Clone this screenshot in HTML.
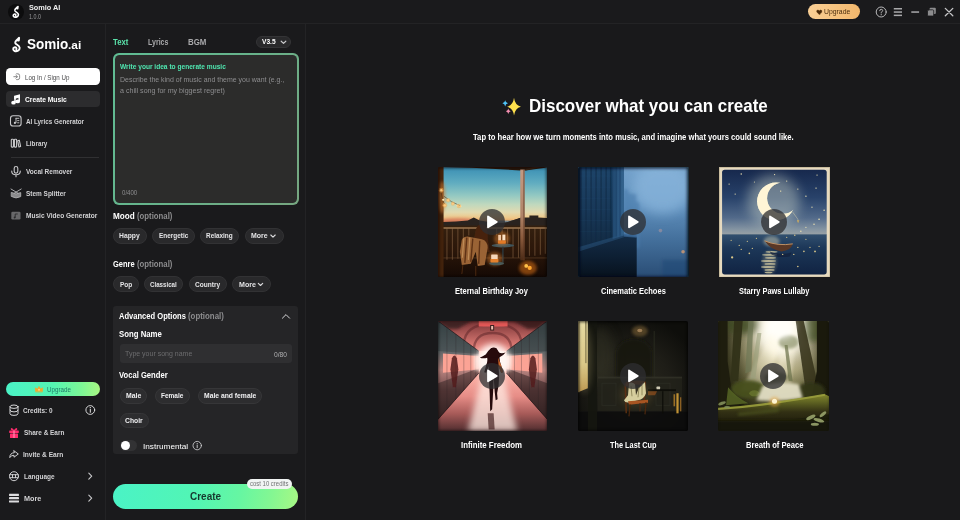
<!DOCTYPE html>
<html lang="en">
<head>
<meta charset="utf-8">
<title>Somio AI</title>
<style>
html,body{margin:0;padding:0;}
body{width:960px;height:520px;overflow:hidden;background:#19191b;font-family:"Liberation Sans",sans-serif;position:relative;}
.abs,.t,.b{position:absolute;}
.t{white-space:pre;margin:0;transform-origin:0 50%;}
#txt{position:absolute;left:0;top:0;width:960px;height:520px;opacity:0.999;}
.b{box-sizing:border-box;}
.chip{position:absolute;box-sizing:border-box;height:15.6px;border-radius:8px;background:#29292b;border:1px solid #323234;}
svg{position:absolute;overflow:visible;}
.thumb{position:absolute;width:110px;height:111px;border-radius:2px;overflow:hidden;}
.thumb>svg{left:0;top:0;width:110px;height:111px;}
.play{position:absolute;width:26px;height:26px;border-radius:13px;background:rgba(46,46,49,0.76);}
</style>
</head>
<body>
<!-- regions -->
<div class="b" style="left:0;top:0;width:960px;height:24px;background:#1a1a1c;border-bottom:1px solid #232325;"></div>
<div class="b" style="left:0;top:24px;width:105.500px;height:496px;background:#1a1a1c;border-right:1px solid #232325;"></div>
<div class="b" style="left:105.500px;top:24px;width:200.200px;height:496px;background:#1a1a1c;border-right:1px solid #232325;"></div>
<div class="b" style="left:305.700px;top:24px;width:654.300px;height:496px;background:#19191b;"></div>

<!-- title bar logo -->
<div class="b" style="left:8px;top:3.5px;width:16px;height:16px;border-radius:8px;background:#0c0c0d;"></div>

<!-- sidebar buttons -->
<div class="b" style="left:6px;top:68px;width:94px;height:17.4px;border-radius:4.5px;background:#ffffff;"></div>
<div class="b" style="left:6px;top:91px;width:94px;height:16px;border-radius:4px;background:#2c2c2e;"></div>
<div class="b" style="left:11px;top:157px;width:88px;height:1px;background:#303032;"></div>
<div class="b" style="left:6px;top:381.6px;width:94px;height:14.6px;border-radius:7.3px;background:linear-gradient(90deg,#4af3c6 0%,#54f4b2 50%,#7cf696 80%,#a8f782 100%);"></div>

<!-- middle panel -->
<div class="b" style="left:256px;top:36px;width:34.6px;height:12.2px;border-radius:6.1px;background:#29292b;border:1px solid #343436;"></div>
<div class="b" style="left:113.300px;top:53.300px;width:185.500px;height:151.300px;border-radius:6px;background:linear-gradient(120deg,#60bd94 0%,#66b48c 45%,#76a680 100%);"></div>
<div class="b" style="left:114.750px;top:54.750px;width:182.600px;height:148.400px;border-radius:4.600px;background:#2c2c2b;"></div>

<div class="chip" style="left:113px;top:228.2px;width:33.6px;"></div>
<div class="chip" style="left:152.4px;top:228.2px;width:42.4px;"></div>
<div class="chip" style="left:200px;top:228.2px;width:39.3px;"></div>
<div class="chip" style="left:244.8px;top:228.2px;width:38.9px;"></div>

<div class="chip" style="left:113px;top:276.4px;width:25.6px;"></div>
<div class="chip" style="left:144.2px;top:276.4px;width:38.8px;"></div>
<div class="chip" style="left:189px;top:276.4px;width:37.8px;"></div>
<div class="chip" style="left:232.4px;top:276.4px;width:38.6px;"></div>

<div class="b" style="left:113px;top:306px;width:185px;height:148px;border-radius:3px;background:#252527;"></div>
<div class="b" style="left:119.6px;top:344.4px;width:172.6px;height:19px;border-radius:3px;background:#2f2f31;"></div>

<div class="chip" style="left:119.7px;top:388.3px;width:27.8px;background:#2d2d2f;border-color:#363638;"></div>
<div class="chip" style="left:154.7px;top:388.3px;width:35.4px;background:#2d2d2f;border-color:#363638;"></div>
<div class="chip" style="left:197.6px;top:388.3px;width:64.6px;background:#2d2d2f;border-color:#363638;"></div>
<div class="chip" style="left:119.7px;top:412.5px;width:29.2px;background:#2d2d2f;border-color:#363638;"></div>

<!-- toggle -->
<div class="b" style="left:119.7px;top:439.6px;width:17.8px;height:11.8px;border-radius:5.9px;background:#323234;"></div>
<div class="b" style="left:120.6px;top:440.8px;width:9.4px;height:9.4px;border-radius:4.7px;background:#ffffff;"></div>

<!-- create button -->
<div class="b" style="left:113px;top:483.6px;width:185px;height:25px;border-radius:12.5px;background:linear-gradient(100deg,#4af3c6 0%,#52f5b4 45%,#66f6a2 68%,#84f792 85%,#a8f884 100%);"></div>
<div class="b" style="left:246.900px;top:478.700px;width:45.400px;height:10.200px;border-radius:5.100px;background:#f1f4f3;"></div>

<!-- top right upgrade -->
<div class="b" style="left:807.7px;top:4.4px;width:52.6px;height:15px;border-radius:7.5px;background:linear-gradient(90deg,#f9cf95,#f3b86c);"></div>

<!-- ===== icons (page coordinates) ===== -->
<svg width="960" height="520" viewBox="0 0 960 520" style="left:0;top:0;pointer-events:none" fill="none" stroke-linecap="round" stroke-linejoin="round">
<defs>

</defs>
<!-- title-bar logo glyph -->
<path d="M7.600 0.600 C5.200 2.600 2.800 4 3.300 6.300 C3.800 8.300 7.900 8.600 8.200 11.600 C8.400 14.600 5 16 2.600 15.200 C0.600 14.500 0.400 12 2.300 11.200 C3.900 10.600 5.200 12 4.400 13.300 M7.600 0.600 L7.200 3.600 L5.500 3.300" transform="translate(12.500 6.100) scale(0.720)" stroke="#fff" stroke-width="2.200"/>
<!-- sidebar logo glyph -->
<path d="M7.600 0.600 C5.200 2.600 2.800 4 3.300 6.300 C3.800 8.300 7.900 8.600 8.200 11.600 C8.400 14.600 5 16 2.600 15.200 C0.600 14.500 0.400 12 2.300 11.200 C3.900 10.600 5.200 12 4.400 13.300 M7.600 0.600 L7.200 3.600 L5.500 3.300" transform="translate(12.300 37.300) scale(0.900)" stroke="#fff" stroke-width="2.100"/>

<!-- login icon -->
<g stroke="#7a7a7c" stroke-width="0.900">
<path d="M16.600 73.800 H17.800 Q19.600 73.800 19.600 75.600 V77.800 Q19.600 79.600 17.800 79.600 H16.600"/>
<path d="M13.800 76.700 H17.300 M15.900 75.200 L17.400 76.700 L15.900 78.200"/>
</g>
<!-- create music (double note) -->
<g fill="#fff" stroke="none">
<path d="M14.200 95.800 L20 94.300 V97.500 L14.200 99 Z"/>
<rect x="14.200" y="96" width="1.600" height="6.700"/><rect x="18.400" y="95" width="1.600" height="6.300"/>
<ellipse cx="13.500" cy="102.700" rx="2.300" ry="1.900"/><ellipse cx="17.700" cy="101.400" rx="2.300" ry="1.900"/>
</g>
<!-- AI lyrics -->
<g stroke="#c9c9cb" stroke-width="1.100">
<rect x="10.500" y="115.800" width="10.600" height="10.200" rx="2.600"/>
<path d="M16 118.300 V122.600 M16 118.300 H18.900 M17.600 120.600 H18.900 M17.600 122.800 H18.900" stroke-width="0.900"/>
<circle cx="14.900" cy="122.900" r="1.100" fill="#c9c9cb" stroke="none"/>
</g>
<!-- library -->
<g stroke="#c9c9cb" stroke-width="1.100">
<rect x="11.300" y="139.300" width="2.200" height="7.800" rx="0.600"/>
<rect x="14.400" y="139.300" width="2.200" height="7.800" rx="0.600"/>
<path d="M17.700 140.800 L19.300 140.200 L20.600 146.400 L18.900 147 Z"/>
</g>
<!-- mic -->
<g stroke="#c9c9cb" stroke-width="1.100">
<rect x="14.200" y="166.500" width="3.600" height="6.600" rx="1.800"/>
<path d="M11.700 171 Q11.700 174.800 16 174.800 Q20.300 174.800 20.300 171 M16 174.800 V176.700"/>
</g>
<!-- drum -->
<g stroke="#a9a9ab" stroke-width="1">
<path d="M11 189 L18.500 193.500 M21.200 189 L13.700 193.500"/>
<path d="M11.600 192.600 Q16.100 195.400 20.700 192.600 V196.600 Q16.100 199.300 11.600 196.600 Z" fill="#8a8a8c"/>
</g>
<!-- video box -->
<rect x="11.300" y="211.800" width="9.200" height="7.800" rx="1.300" fill="#68686a"/>
<path d="M15.200 217.400 V214 H17.300" stroke="#2a2a2c" stroke-width="0.900"/><circle cx="14.600" cy="217.500" r="0.900" fill="#2a2a2c"/>

<!-- crown -->
<path d="M35.600 391.600 L35.300 387.800 L37.400 389 L39 386.400 L40.600 389 L42.700 387.800 L42.400 391.600 Z" fill="#f6a82a" stroke="#f6a82a" stroke-width="0.600"/>
<circle cx="39" cy="389.800" r="1" fill="#fbd68a"/>
<!-- database -->
<g stroke="#d6d6d8" stroke-width="1">
<ellipse cx="14" cy="406.700" rx="4" ry="1.700"/>
<path d="M10 406.700 V413.700 Q10 415.400 14 415.400 Q18 415.400 18 413.700 V406.700 M10 410.200 Q10 411.900 14 411.900 Q18 411.900 18 410.200"/>
</g>
<!-- info -->
<circle cx="90.300" cy="410" r="4.400" stroke="#e6e6e8" stroke-width="0.900"/>
<path d="M90.300 409.400 V412.300" stroke="#e6e6e8" stroke-width="1"/><circle cx="90.300" cy="407.700" r="0.650" fill="#e6e6e8"/>
<!-- gift -->
<g fill="#ff2d6e" stroke="none">
<rect x="9.200" y="430.600" width="9.600" height="2.400" rx="0.400"/>
<rect x="10" y="433.500" width="8" height="4.500" rx="0.500"/>
<path d="M14 430.600 Q10.500 430.400 11 428.800 Q11.800 427.400 14 430.600 Q16.200 427.400 17 428.800 Q17.500 430.400 14 430.600 Z" stroke="#ff2d6e" stroke-width="0.700"/>
</g>
<rect x="13.500" y="430.600" width="1" height="7.400" fill="#ff9fbd"/>
<!-- share arrow -->
<path d="M14 450.800 L18.300 454 L14 457.200 V455.300 Q11 455.100 9.800 457.600 Q9.800 453 14 452.700 Z" stroke="#d6d6d8" stroke-width="0.950"/>
<!-- globe -->
<g stroke="#d6d6d8" stroke-width="0.950">
<circle cx="14" cy="476.200" r="4.500"/>
<path d="M9.800 474.700 H18.200 M9.800 477.700 H18.200 M12.500 474.700 V477.700 M15.500 474.700 V477.700"/>
</g>
<!-- hamburger -->
<g fill="#dcdcde" stroke="none"><rect x="9" y="493.800" width="10" height="2.100" rx="0.400"/><rect x="9" y="497.100" width="10" height="2.100" rx="0.400"/><rect x="9" y="500.400" width="10" height="2.100" rx="0.400"/></g>
<!-- chevrons right -->
<g stroke="#c9c9cb" stroke-width="1.100"><path d="M88.800 473.200 L91.700 476.200 L88.800 479.200"/><path d="M88.800 495.200 L91.700 498.200 L88.800 501.200"/></g>

<!-- v3.5 chevron -->
<path d="M281.200 41.200 L283.500 43.400 L285.800 41.200" stroke="#c9c9cb" stroke-width="1.200"/>
<!-- more chevrons -->
<path d="M270.800 235 L273 237.200 L275.200 235" stroke="#dcdcde" stroke-width="1.100"/>
<path d="M258.300 283.300 L260.500 285.500 L262.700 283.300" stroke="#dcdcde" stroke-width="1.100"/>
<!-- advanced chevron up -->
<path d="M282.400 318.200 L286 314.600 L289.600 318.200" stroke="#d6d6d8" stroke-width="1"/>
<!-- instrumental info -->
<circle cx="197.200" cy="445.600" r="4.200" stroke="#d0d0d2" stroke-width="0.850"/>
<path d="M197.200 445 V447.700" stroke="#d0d0d2" stroke-width="0.900"/><circle cx="197.200" cy="443.500" r="0.600" fill="#d0d0d2"/>

<!-- top-right -->
<path d="M819.300 14.600 L816.800 11.900 Q816.300 10.300 817.800 10.100 Q818.800 10.100 819.300 11 Q819.800 10.100 820.800 10.100 Q822.300 10.300 821.800 11.900 Z" fill="#4a2a08" stroke="#4a2a08" stroke-width="0.500"/>
<circle cx="881.200" cy="12" r="5" stroke="#b9b9bb" stroke-width="1"/>
<path d="M879.700 10.700 Q879.700 9.300 881.200 9.300 Q882.700 9.300 882.700 10.600 Q882.700 11.500 881.200 12.300 V13" stroke="#b9b9bb" stroke-width="0.950"/><circle cx="881.200" cy="14.700" r="0.600" fill="#b9b9bb"/>
<g fill="#a9a9ab" stroke="none"><rect x="893.800" y="8" width="8.200" height="1.500"/><rect x="893.800" y="11.300" width="8.200" height="1.500"/><rect x="893.800" y="14.600" width="8.200" height="1.500"/>
<rect x="911.300" y="11.300" width="7.800" height="1.500"/></g>
<rect x="929.600" y="7.700" width="6.200" height="6.200" rx="1" fill="#8c8c8e"/>
<rect x="927.500" y="9.800" width="6.200" height="6.200" rx="1" fill="#8c8c8e" stroke="#1b1b1d" stroke-width="0.800"/>
<path d="M945.300 8.400 L952.800 15.800 M952.800 8.400 L945.300 15.800" stroke="#c6c6c8" stroke-width="1.300"/>

<!-- sparkles -->
<g stroke="none">
<path d="M514 97.800 Q514.900 105.200 520.900 106.700 Q514.900 108.200 514 115.600 Q513.100 108.200 507.100 106.700 Q513.100 105.200 514 97.800 Z" fill="#ffe14d"/>
<path d="M505.200 100.200 Q505.600 102.800 508 103.300 Q505.600 103.800 505.200 106.400 Q504.800 103.800 502.400 103.300 Q504.800 102.800 505.200 100.200 Z" fill="#4fc3f7"/>
<path d="M508.300 108.600 Q508.700 110.900 510.700 111.300 Q508.700 111.700 508.300 114 Q507.900 111.700 505.900 111.300 Q507.900 110.900 508.300 108.600 Z" fill="#f48fb1"/>
</g>
</svg>

<!-- ===== thumbnails ===== -->
<svg width="0" height="0" style="position:absolute">
<defs>
<filter id="b1" x="-50%" y="-50%" width="200%" height="200%"><feGaussianBlur stdDeviation="0.6"/></filter>
<filter id="b2" x="-50%" y="-50%" width="200%" height="200%"><feGaussianBlur stdDeviation="1.5"/></filter>
<filter id="b3" x="-50%" y="-50%" width="200%" height="200%"><feGaussianBlur stdDeviation="3"/></filter>
<filter id="b5" x="-50%" y="-50%" width="200%" height="200%"><feGaussianBlur stdDeviation="6"/></filter>
<radialGradient id="vig" cx="50%" cy="50%" r="72%"><stop offset="0.72" stop-color="#000" stop-opacity="0"/><stop offset="1" stop-color="#000" stop-opacity="0.75"/></radialGradient>
</defs>
</svg>

<!-- 1: Eternal Birthday Joy -->
<div class="thumb" style="left:437.800px;top:166.500px;width:109.300px;height:110.500px;">
<svg viewBox="0 0 110 110" preserveAspectRatio="none" style="width:109.300px;">
<defs>
<linearGradient id="s1" x1="0" y1="0" x2="0" y2="1">
<stop offset="0" stop-color="#3a8fb4"/><stop offset="0.28" stop-color="#60acc0"/><stop offset="0.5" stop-color="#92c8c2"/><stop offset="0.66" stop-color="#bfd8be"/><stop offset="0.8" stop-color="#e2dab0"/><stop offset="0.9" stop-color="#efc888"/><stop offset="0.97" stop-color="#e8a062"/><stop offset="1" stop-color="#e08850"/>
</linearGradient>
<linearGradient id="f1" x1="0" y1="0" x2="0" y2="1"><stop offset="0" stop-color="#34200f"/><stop offset="0.45" stop-color="#2c170a"/><stop offset="1" stop-color="#140904"/></linearGradient>
<linearGradient id="p1" x1="0" y1="0" x2="0" y2="1"><stop offset="0" stop-color="#c49a82"/><stop offset="0.5" stop-color="#b08468"/><stop offset="0.75" stop-color="#8a5a3c"/><stop offset="1" stop-color="#4a2a16"/></linearGradient>
</defs>
<rect width="110" height="110" fill="#1c0e06"/>
<rect x="5" y="0" width="105" height="56" fill="url(#s1)"/>
<ellipse cx="20" cy="54" rx="20" ry="3.500" fill="#c85a50" opacity="0.55" filter="url(#b2)"/>
<!-- hills -->
<path d="M5 54.500 L18 54 L30 53 L36 50 L42 53 L52 54.500 L64 55 L70 54.500 L78 52 L84 50 L92 50 L92 48 L101 48 L101 50 L110 50.500 L110 62 L5 62 Z" fill="#2a231f"/>
<rect x="60" y="53.100" width="18" height="2" fill="#5f7f92" opacity="0.85"/>
<path d="M66 55.500 L70 54.500 L78 52 L84 50 L84 57 L66 57 Z" fill="#2a231f"/>
<!-- floor / lower -->
<rect x="0" y="58" width="110" height="52" fill="url(#f1)"/>
<!-- balusters -->
<g stroke="#a87e58" stroke-width="1.100" opacity="0.42" filter="url(#b1)">
<path d="M9 61V92M14.500 61V92M20 61V91M25.500 61V74M31 61V68M59 61V68M64.500 61V66M70 61V76M75.500 61V90M81 61V90M92 61V88M97.500 61V88M103 61V87M108 61V86"/>
</g>
<rect x="5" y="59.700" width="105" height="1.500" fill="#b88c62" opacity="0.8"/>
<rect x="5" y="89.500" width="105" height="1.200" fill="#7a5434" opacity="0.4"/>
<!-- left wall -->
<rect x="0" y="0" width="5.600" height="110" fill="#42220c"/>
<ellipse cx="4" cy="30" rx="3.500" ry="16" fill="#c87830" opacity="0.6" filter="url(#b2)"/>
<!-- roof beam -->
<path d="M5 0 L110 0 L110 0.500 L88 3.400 L83 3.400 L34 0.800 Z" fill="#2a180c"/>
<path d="M88 3.400 L104 0 L96 0 L88 2 Z" fill="#3a2414"/>
<!-- post -->
<rect x="82.800" y="2.500" width="4.400" height="90" fill="url(#p1)"/>
<rect x="85.800" y="2.500" width="1.400" height="90" fill="#5a3420" opacity="0.55"/>
<!-- string lights -->
<path d="M3 23 Q4 34 7 37 M6 29 Q13 35 22.500 38.500" stroke="#3a2410" stroke-width="0.500" fill="none"/>
<g fill="#ffe6b0"><circle cx="3.200" cy="23" r="1.300"/><circle cx="5.200" cy="32.500" r="1.100"/><circle cx="6.800" cy="38" r="1.200"/><circle cx="10.200" cy="33" r="1.200"/><circle cx="15" cy="36.300" r="1.100"/><circle cx="19.600" cy="38.200" r="1.100"/><circle cx="22.600" cy="39" r="1"/></g>
<g fill="#ffb050" opacity="0.5" filter="url(#b1)"><circle cx="3.200" cy="23" r="2.400"/><circle cx="6.800" cy="38" r="2.400"/><circle cx="10.200" cy="33" r="2.200"/><circle cx="15" cy="36.300" r="2"/><circle cx="21" cy="38.600" r="2.200"/></g>
<!-- person & blanket -->
<g filter="url(#b1)">
<path d="M38 62 Q41 55 46 57 Q51 60 50 70 L52 84 L40 86 L36 72 Z" fill="#46240f"/>
<path d="M24 72 Q26 68.500 31 69 L44 71.500 Q50 73 50 80 L47 97 L40 98 L38 84 L33 96 L24 97 L22 84 Z" fill="#9a6436"/>
<path d="M29 70 L27 95 M35 71 L33 94 M42 73 L41 96" stroke="#5e3216" stroke-width="1.400" fill="none"/>
<path d="M26 70.500 L24.500 90 M32 70 L30.500 92" stroke="#c89660" stroke-width="1.200" fill="none" opacity="0.8"/>
<path d="M38 98 L38 108 M25 97 L24 106" stroke="#4a2810" stroke-width="1"/>
</g>
<!-- table -->
<ellipse cx="65.300" cy="77.800" rx="11.300" ry="1.900" fill="#3f555c"/>
<rect x="64.500" y="79" width="1.600" height="16" fill="#2a3438"/>
<!-- cake 1 -->
<ellipse cx="64.300" cy="71" rx="8" ry="7" fill="#f08a30" opacity="0.4" filter="url(#b2)"/>
<rect x="60.300" y="72.500" width="8" height="3.600" rx="0.800" fill="#e27a26"/>
<rect x="60.600" y="67.300" width="2.800" height="5.400" fill="#f3c9a6"/><rect x="64.800" y="67" width="3" height="5.600" fill="#fbe2c6"/>
<!-- cake 2 -->
<ellipse cx="57" cy="91" rx="8" ry="7" fill="#f08a30" opacity="0.4" filter="url(#b2)"/>
<ellipse cx="59" cy="95.600" rx="7.500" ry="1.700" fill="#4a5a58"/>
<rect x="52.800" y="91" width="8" height="3.600" rx="0.800" fill="#e5812c"/>
<rect x="53.500" y="86.600" width="6.600" height="4.600" rx="0.600" fill="#f6d6b8"/>
<!-- candles -->
<ellipse cx="90.500" cy="100" rx="9" ry="7" fill="#e87818" opacity="0.5" filter="url(#b2)"/>
<circle cx="88.800" cy="98" r="1.900" fill="#ffc24a"/><circle cx="92.300" cy="100" r="2.100" fill="#ffa62e"/>
<rect x="-2" y="-2" width="114" height="114" fill="none" stroke="#0a0604" stroke-width="6" opacity="0.7" filter="url(#b2)"/>
</svg>
<div class="play" style="left:41.4px;top:42.600px;"><svg viewBox="0 0 26 26" style="left:0;top:0;width:26px;height:26px"><path d="M9 7.500 L17.800 12.900 L9 18.300 Z" fill="#fff" stroke="#fff" stroke-width="1.800" stroke-linejoin="round"/></svg></div>
</div>

<!-- 2: Cinematic Echoes -->
<div class="thumb" style="left:578px;top:166.500px;width:110.600px;height:110.500px;">
<svg viewBox="0 0 110 110" preserveAspectRatio="none" style="width:110.600px;">
<defs>
<linearGradient id="fog2" x1="0" y1="0" x2="0" y2="1"><stop offset="0" stop-color="#74a2cb"/><stop offset="0.35" stop-color="#6090bd"/><stop offset="0.65" stop-color="#44709c"/><stop offset="1" stop-color="#294c74"/></linearGradient>
<linearGradient id="bld2" x1="0" y1="0" x2="0" y2="1"><stop offset="0" stop-color="#1d4469"/><stop offset="0.5" stop-color="#183858"/><stop offset="1" stop-color="#11283f"/></linearGradient>
<linearGradient id="low2" x1="0" y1="0" x2="0" y2="1"><stop offset="0" stop-color="#142c46"/><stop offset="0.5" stop-color="#0d1f33"/><stop offset="1" stop-color="#07111c"/></linearGradient>
<linearGradient id="edge2" x1="0" y1="0" x2="1" y2="0"><stop offset="0" stop-color="#20486f"/><stop offset="1" stop-color="#34648f"/></linearGradient>
</defs>
<rect width="110" height="110" fill="url(#fog2)"/>
<ellipse cx="84" cy="20" rx="30" ry="26" fill="#8ab6dc" opacity="0.75" filter="url(#b5)"/>
<!-- far building -->
<path d="M45 22 L50 22 L50 26 L58 27 L58 34 L61 36 L61 80 L45 80 Z" fill="#4a7cac" opacity="0.6" filter="url(#b2)"/>
<!-- building -->
<rect x="0" y="0" width="45.700" height="84" fill="url(#bld2)"/>
<g stroke="#102a44" stroke-width="1.400" opacity="0.6" filter="url(#b1)"><path d="M3 0V82M8 0V81M13 0V80M18 0V78M23 0V77M28 0V75M32.500 0V74"/></g>
<g stroke="#2a5a86" stroke-width="0.700" opacity="0.14"><path d="M0 9H33M0 20H33M0 31H33M0 42H33M0 53H33M0 64H33"/></g>
<rect x="34.500" y="0" width="11.200" height="72" fill="url(#edge2)"/>
<path d="M38 0V71M41.800 0V70" stroke="#1b4068" stroke-width="1" opacity="0.8"/>
<!-- lower block -->
<path d="M0 82 L45.700 68 L58.400 69.500 L58.400 110 L0 110 Z" fill="url(#low2)"/>
<path d="M0 79.500 L45.700 66.500 L45.700 69.500 L0 84 Z" fill="#2a5680" opacity="0.5" filter="url(#b1)"/>
<path d="M45.700 66.500 L58.400 68 L58.400 70 L45.700 69 Z" fill="#335f8c" opacity="0.8"/>
<!-- lights -->
<circle cx="82" cy="63" r="1.800" fill="#b89aa0" opacity="0.5" filter="url(#b1)"/>
<circle cx="104.500" cy="84" r="1.800" fill="#e0a070" opacity="0.75" filter="url(#b1)"/>
<rect x="84" y="92" width="26" height="18" fill="#1e4674" opacity="0.5" filter="url(#b2)"/>
<rect x="-3" y="-3" width="116" height="116" fill="none" stroke="#050a12" stroke-width="9" opacity="0.8" filter="url(#b2)"/>
<rect x="0" y="0" width="2.200" height="110" fill="#06101c" opacity="0.7"/>
</svg>
<div class="play" style="left:42px;top:42.500px;"><svg viewBox="0 0 26 26" style="left:0;top:0;width:26px;height:26px"><path d="M9 7.500 L17.800 12.900 L9 18.300 Z" fill="#fff" stroke="#fff" stroke-width="1.800" stroke-linejoin="round"/></svg></div>
</div>

<!-- 3: Starry Paws Lullaby -->
<div class="thumb" style="left:718.600px;top:166.500px;width:111.200px;height:110.500px;border-radius:1px;">
<svg viewBox="0 0 110 110" preserveAspectRatio="none" style="width:111.200px;height:110.500px">
<defs>
<linearGradient id="sky3" x1="0" y1="0" x2="0" y2="1"><stop offset="0" stop-color="#15264a"/><stop offset="0.45" stop-color="#28426a"/><stop offset="0.75" stop-color="#526a8a"/><stop offset="0.92" stop-color="#8494a2"/><stop offset="1" stop-color="#9aa2a6"/></linearGradient>
<linearGradient id="sea3" x1="0" y1="0" x2="0" y2="1"><stop offset="0" stop-color="#32506f"/><stop offset="0.3" stop-color="#1d3859"/><stop offset="1" stop-color="#0f2140"/></linearGradient>
<clipPath id="c3"><rect x="3.050" y="2.700" width="103.500" height="104.200" rx="2.600"/></clipPath>
<mask id="moon3"><rect width="110" height="110" fill="#000"/><circle cx="56.500" cy="34.200" r="18.800" fill="#fff"/><circle cx="63.200" cy="31.000" r="15.600" fill="#000"/></mask>
</defs>
<rect width="110" height="110" fill="#e6dac0"/>
<rect x="0.500" y="0.500" width="109" height="109" fill="none" stroke="#c9bc9e" stroke-width="1"/>
<g clip-path="url(#c3)">
<rect x="0" y="0" width="110" height="67.400" fill="url(#sky3)"/>
<rect x="0" y="67" width="110" height="43" fill="url(#sea3)"/>
<ellipse cx="54" cy="34" rx="26" ry="26" fill="#d4dccc" opacity="0.42" filter="url(#b5)"/>
<g mask="url(#moon3)"><rect width="110" height="110" fill="#fff6d6"/></g>
<g mask="url(#moon3)" filter="url(#b2)" opacity="0.7"><rect width="110" height="110" fill="#fff6d6"/></g>
<!-- reflection -->
<g fill="#d8cfa4" opacity="0.8" filter="url(#b1)"><ellipse cx="52" cy="84.500" rx="6" ry="0.800"/><ellipse cx="50" cy="87.500" rx="7.500" ry="0.900"/><ellipse cx="51" cy="90.500" rx="5.500" ry="0.800"/><ellipse cx="49" cy="93.500" rx="7.500" ry="1"/><ellipse cx="50.500" cy="96.500" rx="5.500" ry="0.900"/><ellipse cx="48.500" cy="99.500" rx="7" ry="1"/><ellipse cx="50" cy="102.500" rx="5" ry="0.900"/><ellipse cx="49" cy="105" rx="4" ry="0.800"/></g>
<ellipse cx="50" cy="95" rx="7" ry="12" fill="#b8b494" opacity="0.3" filter="url(#b2)"/>
<ellipse cx="52" cy="74" rx="8" ry="5" fill="#c8c8b0" opacity="0.5" filter="url(#b2)"/>
<!-- boat -->
<path d="M45 73.500 Q58 79 73 76.500 Q71 83.500 62 84 Q52 83.500 45 73.500 Z" fill="#5a3826"/>
<path d="M45 73.500 Q58 79 73 76.500" stroke="#c8986a" stroke-width="0.9" fill="none"/>
<path d="M50 84 Q60 88 72 85 L70 89 Q60 91 52 87 Z" fill="#14203a" opacity="0.7"/>
<!-- fishing line -->
<path d="M73 45 L78 52 L78 54" stroke="#e8dcb0" stroke-width="0.4" fill="none"/><path d="M77 53 L79.500 53 L78.300 56 Z" fill="#c8a860"/>
<!-- stars -->
<g fill="#f2e6b4"><circle cx="22" cy="7" r="0.700"/><circle cx="55" cy="7.500" r="0.600"/><circle cx="67" cy="14" r="0.600"/><circle cx="97" cy="8" r="0.600"/><circle cx="10" cy="17" r="0.600"/><circle cx="16" cy="27" r="0.600"/><circle cx="61" cy="24" r="0.700"/><circle cx="78" cy="22" r="0.600"/><circle cx="86" cy="29" r="0.700"/><circle cx="96" cy="21" r="0.700"/><circle cx="92" cy="40" r="0.600"/><circle cx="35" cy="15" r="0.500"/><circle cx="99" cy="52" r="0.800"/><circle cx="94" cy="57" r="0.700"/><circle cx="86" cy="60" r="0.600"/><circle cx="81" cy="64" r="0.700"/><circle cx="104" cy="43" r="0.700"/></g>
<g fill="#f0d890" opacity="0.9"><circle cx="12" cy="73" r="0.600"/><circle cx="20" cy="78" r="0.700"/><circle cx="28" cy="74" r="0.600"/><circle cx="33" cy="81" r="0.700"/><circle cx="37" cy="71" r="0.600"/><circle cx="30" cy="86" r="0.800"/><circle cx="67" cy="70" r="0.600"/><circle cx="75" cy="68" r="0.700"/><circle cx="78" cy="80" r="0.700"/><circle cx="84" cy="84" r="0.800"/><circle cx="90" cy="80" r="0.700"/><circle cx="95" cy="84" r="0.900"/><circle cx="99" cy="79" r="0.700"/><circle cx="63" cy="87" r="0.700"/><circle cx="74" cy="87" r="0.700"/><circle cx="78" cy="99" r="0.800"/><circle cx="13" cy="90" r="1.100"/><circle cx="22" cy="82" r="0.700"/><circle cx="86" cy="72" r="0.600"/></g>
</g>
</svg>
<div class="play" style="left:42px;top:42.600px;"><svg viewBox="0 0 26 26" style="left:0;top:0;width:26px;height:26px"><path d="M9 7.500 L17.800 12.900 L9 18.300 Z" fill="#fff" stroke="#fff" stroke-width="1.800" stroke-linejoin="round"/></svg></div>
</div>

<!-- 4: Infinite Freedom -->
<div class="thumb" style="left:437.800px;top:320.800px;width:109.300px;height:110.400px;">
<svg viewBox="0 0 110 110" preserveAspectRatio="none" style="width:109.300px;height:110.400px">
<defs>
<radialGradient id="g4" cx="50%" cy="36%" r="62%"><stop offset="0" stop-color="#fff6f0"/><stop offset="0.22" stop-color="#ffc0b4"/><stop offset="0.42" stop-color="#f67a74"/><stop offset="0.68" stop-color="#a84044"/><stop offset="1" stop-color="#441a1c"/></radialGradient>
<linearGradient id="wl4" x1="0" y1="0" x2="0" y2="1"><stop offset="0" stop-color="#3c4a4c"/><stop offset="0.3" stop-color="#5c6668"/><stop offset="0.5" stop-color="#b88480"/><stop offset="0.7" stop-color="#6e4848"/><stop offset="1" stop-color="#3a2828"/></linearGradient>
<linearGradient id="fl4" x1="0" y1="0" x2="0" y2="1"><stop offset="0" stop-color="#ffb6aa"/><stop offset="0.4" stop-color="#e68c86"/><stop offset="0.7" stop-color="#a65a58"/><stop offset="1" stop-color="#4e2c2e"/></linearGradient>
<linearGradient id="ce4" x1="0" y1="0" x2="0" y2="1"><stop offset="0" stop-color="#7a3436"/><stop offset="1" stop-color="#f08a82"/></linearGradient>
</defs>
<rect width="110" height="110" fill="url(#g4)"/>
<!-- ceiling -->
<path d="M0 0 L110 0 L69 30 L41 30 Z" fill="url(#ce4)"/>
<g fill="none" stroke="#5a2426" stroke-width="2.400" opacity="0.5" filter="url(#b1)"><path d="M36 30 Q36 12 55 12 Q74 12 74 30"/><path d="M26 24 Q26 3 55 3 Q84 3 84 24"/></g>
<path d="M0 0 L34 0 L20 8 L10 8 Z" fill="#2a1a1c" opacity="0.75" filter="url(#b2)"/>
<path d="M110 0 L76 0 L90 8 L100 8 Z" fill="#2a1416" opacity="0.75" filter="url(#b2)"/>
<rect x="41" y="0" width="29" height="5.500" fill="#ee5c5a" opacity="0.9" filter="url(#b1)"/>
<rect x="52.500" y="4" width="4" height="5.500" fill="#3a2020"/><rect x="53.500" y="5" width="2" height="3.500" fill="#f0c0b0"/>
<!-- floor -->
<path d="M41 52 L69 52 L110 98 L110 110 L0 110 L0 98 Z" fill="url(#fl4)"/>
<path d="M45 52 L65 52 L80 110 L30 110 Z" fill="#ffece4" opacity="0.75" filter="url(#b3)"/>
<!-- walls -->
<path d="M0 0 L41 30 L41 52 L0 98 Z" fill="url(#wl4)"/>
<path d="M110 0 L69 30 L69 52 L110 98 Z" fill="url(#wl4)"/>
<path d="M0 0 L41 30 L41 33 L0 30 Z" fill="#262c2e" opacity="0.3"/>
<path d="M110 0 L69 30 L69 33 L110 30 Z" fill="#262a2c" opacity="0.4"/>
<path d="M0 62 L41 47 L41 52 L0 98 Z" fill="#2c1c1e" opacity="0.45" filter="url(#b1)"/>
<path d="M110 62 L69 47 L69 52 L110 98 Z" fill="#2c1c1e" opacity="0.5" filter="url(#b1)"/>
<!-- band of light on walls -->
<path d="M5 32.500 L41 35 L41 48 L5 51.500 Z" fill="#ffa596" opacity="0.97" filter="url(#b1)"/>
<path d="M105 32.500 L69 35 L69 48 L105 51.500 Z" fill="#ffa596" opacity="0.97" filter="url(#b1)"/>
<path d="M0 0 L41 30 M0 98 L41 52 M110 0 L69 30 M110 98 L69 52" stroke="#1e1416" stroke-width="0.900" opacity="0.7"/>
<g stroke="#2a2024" stroke-width="0.600" opacity="0.45"><path d="M9 6.500V88M18 13V78M26 19V69M33 24V61M38 27.500V55.500M101 6.500V88M92 13V78M84 19V69M77 24V61M72 27.500V55.500"/></g>
<!-- center band -->
<rect x="36" y="34" width="38" height="15" fill="#ffe0d6" opacity="0.8" filter="url(#b2)"/>
<ellipse cx="56" cy="39" rx="17" ry="16" fill="#fff8f4" opacity="0.95" filter="url(#b3)"/>
<!-- reflections of figure -->
<path d="M14 37 Q16.500 32 19 37 L20.500 48 L18 66 L15 66 L12.500 48 Z" fill="#521a1e" opacity="0.85" filter="url(#b1)"/>
<path d="M93 37 Q95.500 32 98 37 L99.500 48 L97 66 L94 66 L91.500 48 Z" fill="#521a1e" opacity="0.85" filter="url(#b1)"/>
<!-- figure -->
<g fill="#260a0c">
<circle cx="56" cy="29.500" r="3.200"/>
<path d="M53.500 27 Q50 30 48 33.500 Q45 35.500 42 36.500 Q46 37.500 49.500 36.500 L50 41 L52.500 38.500 L59.500 38.500 L62 41 L62 36 Q65.500 35 68 31.500 Q64 33 61.500 31.500 Q60 28.500 58.500 27 Z"/>
<path d="M51 36 L61 36 L63.500 44 L65.500 51 L63.500 51.500 L61 45 L61.500 55 L50.500 55 L51 45 L48.500 51.500 L46.500 51 L48.500 44 Z"/>
<path d="M51 55 L56 55 L55.500 70 L54.500 88 L52.500 90 L52 72 Z"/>
<path d="M56 55 L61.500 55 L61 64 L59.500 72 L60 78 L58 79 L57 70 Z"/>
</g>
<path d="M60.500 36.500 L63.500 44 L65.500 51 L63.500 51.500 L61 45 Z" fill="#e0702c" opacity="0.9"/>
<path d="M50 92 L56 92 L57 108 L51 108 Z" fill="#3a1616" opacity="0.65" filter="url(#b1)"/>
<rect x="-3" y="-3" width="116" height="116" fill="none" stroke="#0a0506" stroke-width="7" opacity="0.7" filter="url(#b2)"/>
</svg>
<div class="play" style="left:41.400px;top:42.400px;"><svg viewBox="0 0 26 26" style="left:0;top:0;width:26px;height:26px"><path d="M9 7.500 L17.800 12.900 L9 18.300 Z" fill="#fff" stroke="#fff" stroke-width="1.800" stroke-linejoin="round"/></svg></div>
</div>

<!-- 5: The Last Cup -->
<div class="thumb" style="left:578.2px;top:320.800px;height:110.4px;">
<svg viewBox="0 0 110 110" preserveAspectRatio="none" style="height:110.4px">
<defs>
<linearGradient id="w5" x1="0" y1="0" x2="0" y2="1"><stop offset="0" stop-color="#e8dea8"/><stop offset="0.6" stop-color="#dcc888"/><stop offset="1" stop-color="#b89048"/></linearGradient>
<radialGradient id="r5" cx="50%" cy="58%" r="62%"><stop offset="0" stop-color="#2a291f"/><stop offset="0.55" stop-color="#1e1d17"/><stop offset="1" stop-color="#0e0e0b"/></radialGradient>
</defs>
<rect width="110" height="110" fill="url(#r5)"/>
<ellipse cx="22" cy="34" rx="14" ry="30" fill="#4a4a34" opacity="0.35" filter="url(#b5)"/>
<!-- arch -->
<path d="M38 56 L38 32 Q40 19 56 18 Q72 19 74 32 L74 56 Z" fill="#121310" opacity="0.8" filter="url(#b2)"/>
<rect x="75.500" y="10" width="1.500" height="46" fill="#2a2b20" opacity="0.6"/>
<!-- lamp -->
<ellipse cx="61.800" cy="10" rx="8" ry="5.500" fill="#7a6034" opacity="0.6" filter="url(#b2)"/>
<ellipse cx="61.800" cy="9.500" rx="2.600" ry="1.800" fill="#a8865a" opacity="0.85" filter="url(#b1)"/>
<!-- wainscot -->
<rect x="20" y="55.500" width="84" height="2" fill="#35342a" opacity="0.75" filter="url(#b1)"/>
<rect x="20" y="57.500" width="84" height="32" fill="#24231b" opacity="0.7"/>
<g fill="none" stroke="#2e2f26" stroke-width="0.800" opacity="0.8"><rect x="24" y="62" width="14" height="22"/><rect x="78" y="62" width="14" height="22"/></g>
<!-- floor -->
<rect x="0" y="90" width="110" height="20" fill="#0e0f0b" opacity="0.9" filter="url(#b1)"/>
<!-- left wall -->
<rect x="10" y="0" width="9" height="110" fill="#15160f" opacity="0.9"/>
<!-- window -->
<path d="M0 0 L9.800 0 L9.800 67 L0 71 Z" fill="url(#w5)"/>
<rect x="7.400" y="0" width="1" height="42" fill="#5a5030"/>
<rect x="0" y="0" width="2" height="71" fill="#8a7a48" opacity="0.5"/>
<ellipse cx="6" cy="38" rx="8" ry="34" fill="#d8c888" opacity="0.22" filter="url(#b3)"/>
<!-- table -->
<rect x="70" y="68" width="28" height="1.800" fill="#0c0c08" opacity="0.9"/><rect x="84" y="70" width="1.500" height="22" fill="#0c0c08" opacity="0.8"/>
<rect x="78.500" y="65.300" width="3.600" height="2.700" rx="0.600" fill="#cfcab4"/>
<path d="M70 70 L79 70 L77 74 L70 74 Z" fill="#8a4a1c" opacity="0.8"/>
<!-- slats -->
<g filter="url(#b1)"><rect x="95.500" y="73" width="1.600" height="12" fill="#9a6e26"/><rect x="98.400" y="72" width="2.200" height="20" fill="#c09236"/><rect x="102" y="76" width="1.300" height="14" fill="#8a5e20"/></g>
<!-- chair -->
<ellipse cx="58" cy="74" rx="16" ry="12" fill="#6a5a30" opacity="0.3" filter="url(#b3)"/>
<g filter="url(#b1)">
<path d="M46.500 62 L48 62 L49 92 L47.500 92 Z M66 60.500 L68 60.500 L67 80 L65.500 80 Z" fill="#5a2e12"/>
<path d="M48 61 Q57 58 67 60 L66 64 Q57 62 48 65 Z" fill="#6a3a18"/>
<path d="M51 62 Q54 60 57 63 L58 74 Q62 62 67 61 L68 72 Q66 78 60 79 L52 81 Q47 82 46 79 L50 74 Z" fill="#d6ce9e"/>
<path d="M53 65 L54 75 M61 66 L60 76 M64 64 L64 74" stroke="#8c8458" stroke-width="0.900" fill="none"/>
<path d="M50 80 L70 78.500 L70 81.500 L51 83.500 Z" fill="#a85420"/>
<path d="M52 83 L51 95 M68 81 L67 93 M62 82 L62 90" stroke="#4a260e" stroke-width="1.200"/>
</g>
<rect x="-3" y="-3" width="116" height="116" fill="none" stroke="#060604" stroke-width="8" opacity="0.75" filter="url(#b2)"/>
</svg>
<div class="play" style="left:41.4px;top:42.400px;"><svg viewBox="0 0 26 26" style="left:0;top:0;width:26px;height:26px"><path d="M9 7.500 L17.800 12.900 L9 18.300 Z" fill="#fff" stroke="#fff" stroke-width="1.800" stroke-linejoin="round"/></svg></div>
</div>

<!-- 6: Breath of Peace -->
<div class="thumb" style="left:718.300px;top:320.800px;width:111.100px;height:110.400px;">
<svg viewBox="0 0 110 110" preserveAspectRatio="none" style="width:111px;height:110.4px">
<defs>
<radialGradient id="g6" cx="58%" cy="8%" r="80%"><stop offset="0" stop-color="#fffcee"/><stop offset="0.25" stop-color="#f2ead0"/><stop offset="0.48" stop-color="#c2ba8e"/><stop offset="0.7" stop-color="#767248"/><stop offset="0.9" stop-color="#3c3c20"/><stop offset="1" stop-color="#22230e"/></radialGradient>
<linearGradient id="lg6" x1="0" y1="0" x2="0" y2="1"><stop offset="0" stop-color="#84882e"/><stop offset="0.25" stop-color="#5e6222"/><stop offset="0.55" stop-color="#323014"/><stop offset="1" stop-color="#1a180a"/></linearGradient>
<linearGradient id="sd6" x1="0" y1="0" x2="1" y2="0"><stop offset="0" stop-color="#1a1a0a" stop-opacity="0.85"/><stop offset="0.28" stop-color="#1a1a0a" stop-opacity="0.25"/><stop offset="0.5" stop-color="#1a1a0a" stop-opacity="0"/><stop offset="0.8" stop-color="#1a1a0a" stop-opacity="0.2"/><stop offset="1" stop-color="#1a1a0a" stop-opacity="0.8"/></linearGradient>
</defs>
<rect width="110" height="110" fill="url(#g6)"/>
<rect width="110" height="110" fill="url(#sd6)"/>
<!-- foliage top -->
<ellipse cx="24" cy="4" rx="18" ry="9" fill="#3e4a22" opacity="0.8" filter="url(#b3)"/>
<ellipse cx="95" cy="8" rx="14" ry="13" fill="#454f28" opacity="0.85" filter="url(#b3)"/>
<ellipse cx="63" cy="8" rx="24" ry="26" fill="#fffdf2" opacity="0.95" filter="url(#b5)"/>
<!-- light rays -->
<path d="M60 0 L72 0 L42 70 L22 70 Z" fill="#fff8e0" opacity="0.32" filter="url(#b2)"/>
<path d="M70 0 L80 0 L72 62 L56 62 Z" fill="#fff8e0" opacity="0.32" filter="url(#b2)"/>
<!-- hazy trees -->
<path d="M30 0 L35 0 L33 50 L27 52 Z" fill="#6e7654" opacity="0.75" filter="url(#b1)"/>
<path d="M39 12 L43 12 L37 58 L32 58 Z" fill="#9aa07c" opacity="0.6" filter="url(#b1)"/>
<path d="M66 24 L69 24 L74 60 L70 60 Z" fill="#6a704a" opacity="0.7" filter="url(#b1)"/>
<ellipse cx="70" cy="21" rx="10" ry="7" fill="#767e52" opacity="0.6" filter="url(#b2)"/>
<path d="M77 0 L85 0 L100 68 L87 70 Z" fill="#38361e" opacity="0.9" filter="url(#b1)"/>
<!-- trunks -->
<path d="M0 0 L9.500 0 L9.500 40 L13 66 L26 84 L0 86 Z" fill="#1e1d0e"/>
<path d="M16 0 L24.500 0 L21.500 40 L20 60 L12.500 60 Z" fill="#323219" opacity="0.97"/>
<path d="M98 0 L110 0 L110 90 L92 80 L98 50 Z" fill="#1a190c"/>
<!-- ground mid -->
<ellipse cx="30" cy="68" rx="17" ry="9" fill="#46501f" opacity="0.95" filter="url(#b2)"/>
<ellipse cx="92" cy="70" rx="14" ry="9" fill="#303616" opacity="0.95" filter="url(#b2)"/>
<path d="M10 66 Q18 76 30 82 L8 84 Z" fill="#5a6a26" opacity="0.8" filter="url(#b1)"/>
<ellipse cx="36" cy="72" rx="5" ry="3" fill="#6e7c30" opacity="0.7" filter="url(#b1)"/>
<!-- stream -->
<path d="M44 65 Q60 59 80 63 L84 77 Q60 81 38 79 Z" fill="#e2dec4" opacity="0.95" filter="url(#b2)"/>
<ellipse cx="58" cy="56" rx="12" ry="5" fill="#3a421f" opacity="0.5" filter="url(#b2)"/>
<!-- log -->
<path d="M0 87 Q30 85 56 81 Q84 77 106 73 L110 75 L110 93 Q70 99 40 102 Q16 105 0 105 Z" fill="url(#lg6)"/>
<path d="M0 87.500 Q30 85.500 56 81.500 Q84 77.500 106 73.500" stroke="#9a9e3c" stroke-width="2.200" fill="none" opacity="0.9" filter="url(#b1)"/>
<path d="M20 93 Q40 91 60 89" stroke="#566020" stroke-width="3" fill="none" opacity="0.6" filter="url(#b2)"/>
<rect x="-2" y="99" width="114" height="13" fill="#161507" opacity="0.92" filter="url(#b2)"/>
<!-- orb -->
<circle cx="56" cy="80.500" r="5" fill="#e8a848" opacity="0.55" filter="url(#b2)"/><circle cx="56" cy="80" r="2.500" fill="#fff4d0"/>
<!-- ferns -->
<g fill="#98a46c" opacity="0.9" filter="url(#b1)"><ellipse cx="92" cy="96" rx="5" ry="1.800" transform="rotate(-25 92 96)"/><ellipse cx="100" cy="99" rx="5.500" ry="1.800" transform="rotate(15 100 99)"/><ellipse cx="104" cy="93" rx="4" ry="1.600" transform="rotate(-40 104 93)"/><ellipse cx="96" cy="103" rx="4" ry="1.500"/></g>
<g fill="#82905a" opacity="0.9"><ellipse cx="4" cy="82" rx="4" ry="1.600" transform="rotate(-20 4 82)"/><ellipse cx="9" cy="86" rx="3" ry="1.300"/></g>
<path d="M-3 -3 V113 H113 V-3" fill="none" stroke="#0a0a04" stroke-width="5" opacity="0.5" filter="url(#b2)"/>
<ellipse cx="62" cy="6" rx="14" ry="12" fill="#ffffff" opacity="0.7" filter="url(#b3)"/>
</svg>
<div class="play" style="left:42px;top:42.400px;"><svg viewBox="0 0 26 26" style="left:0;top:0;width:26px;height:26px"><path d="M9 7.500 L17.800 12.900 L9 18.300 Z" fill="#fff" stroke="#fff" stroke-width="1.800" stroke-linejoin="round"/></svg></div>
</div>

<div id="txt">
<div class="t" style="left:28.59px;top:2.45px;font-size:8px;line-height:11.2px;font-weight:700;color:#f0f0f0;transform:scaleX(0.9133);">Somio AI</div>
<div class="t" style="left:28.70px;top:11.91px;font-size:7px;line-height:9.8px;font-weight:400;color:#9a9a9c;transform:scaleX(0.7629);">1.0.0</div>
<div class="t" style="left:27.24px;top:32.90px;font-size:15.4px;line-height:21.56px;font-weight:700;color:#ffffff;transform:scaleX(0.8765);">Somio</div>
<div class="t" style="left:68.33px;top:38.38px;font-size:11px;line-height:15.4px;font-weight:700;color:#ffffff;transform:scaleX(1.0815);">.ai</div>
<div class="t" style="left:24.65px;top:72.55px;font-size:7.4px;line-height:10.36px;font-weight:400;color:#4a4a4c;transform:scaleX(0.8361);">Log In / Sign Up</div>
<div class="t" style="left:25.22px;top:94.55px;font-size:7.4px;line-height:10.36px;font-weight:700;color:#ffffff;transform:scaleX(0.9068);">Create Music</div>
<div class="t" style="left:25.65px;top:116.55px;font-size:7.4px;line-height:10.36px;font-weight:700;color:#d2d2d4;transform:scaleX(0.8493);">AI Lyrics Generator</div>
<div class="t" style="left:25.65px;top:138.55px;font-size:7.4px;line-height:10.36px;font-weight:700;color:#d2d2d4;transform:scaleX(0.8510);">Library</div>
<div class="t" style="left:25.64px;top:166.85px;font-size:7.4px;line-height:10.36px;font-weight:700;color:#d2d2d4;transform:scaleX(0.8765);">Vocal Remover</div>
<div class="t" style="left:25.64px;top:189.05px;font-size:7.4px;line-height:10.36px;font-weight:700;color:#d2d2d4;transform:scaleX(0.8736);">Stem Splitter</div>
<div class="t" style="left:25.63px;top:211.05px;font-size:7.4px;line-height:10.36px;font-weight:700;color:#d2d2d4;transform:scaleX(0.8875);">Music Video Generator</div>
<div class="t" style="left:46.65px;top:384.78px;font-size:7.2px;line-height:10.08px;font-weight:400;color:#1f7a68;transform:scaleX(0.8669);">Upgrade</div>
<div class="t" style="left:23.44px;top:405.55px;font-size:7.4px;line-height:10.36px;font-weight:700;color:#d2d2d4;transform:scaleX(0.8661);">Credits: 0</div>
<div class="t" style="left:23.64px;top:427.55px;font-size:7.4px;line-height:10.36px;font-weight:700;color:#d2d2d4;transform:scaleX(0.8687);">Share &amp; Earn</div>
<div class="t" style="left:23.43px;top:449.55px;font-size:7.4px;line-height:10.36px;font-weight:700;color:#d2d2d4;transform:scaleX(0.8925);">Invite &amp; Earn</div>
<div class="t" style="left:23.64px;top:471.55px;font-size:7.4px;line-height:10.36px;font-weight:700;color:#d2d2d4;transform:scaleX(0.8775);">Language</div>
<div class="t" style="left:23.59px;top:493.55px;font-size:7.4px;line-height:10.36px;font-weight:700;color:#d2d2d4;transform:scaleX(0.9806);">More</div>
<div class="t" style="left:113.07px;top:37.12px;font-size:8.2px;line-height:11.48px;font-weight:700;color:#5be3ab;transform:scaleX(0.9436);">Text</div>
<div class="t" style="left:147.61px;top:37.12px;font-size:8.2px;line-height:11.48px;font-weight:700;color:#a9a9ab;transform:scaleX(0.8569);">Lyrics</div>
<div class="t" style="left:187.56px;top:37.12px;font-size:8.2px;line-height:11.48px;font-weight:700;color:#a9a9ab;transform:scaleX(0.9638);">BGM</div>
<div class="t" style="left:261.63px;top:37.48px;font-size:7.2px;line-height:10.08px;font-weight:700;color:#ffffff;transform:scaleX(0.9195);">V3.5</div>
<div class="t" style="left:119.63px;top:61.81px;font-size:7.6px;line-height:10.64px;font-weight:700;color:#4fe6b0;transform:scaleX(0.8689);">Write your idea to generate music</div>
<div class="t" style="left:119.61px;top:74.55px;font-size:7.4px;line-height:10.36px;font-weight:400;color:#8e8e90;transform:scaleX(0.9434);">Describe the kind of music and theme you want (e.g.,</div>
<div class="t" style="left:119.60px;top:85.85px;font-size:7.4px;line-height:10.36px;font-weight:400;color:#8e8e90;transform:scaleX(0.9594);">a chill song for my biggest regret)</div>
<div class="t" style="left:121.66px;top:188.90px;font-size:6.4px;line-height:8.96px;font-weight:400;color:#8e8e90;transform:scaleX(0.9510);">0/400</div>
<div class="t" style="left:113.24px;top:210.89px;font-size:8.4px;line-height:11.76px;font-weight:700;color:#ffffff;transform:scaleX(0.9737);">Mood</div>
<div class="t" style="left:137.16px;top:210.89px;font-size:8.4px;line-height:11.76px;font-weight:700;color:#8c8c8e;transform:scaleX(0.9288);">(optional)</div>
<div class="t" style="left:119.22px;top:231.28px;font-size:7.2px;line-height:10.08px;font-weight:700;color:#e4e4e6;transform:scaleX(0.9425);">Happy</div>
<div class="t" style="left:158.64px;top:231.28px;font-size:7.2px;line-height:10.08px;font-weight:700;color:#e4e4e6;transform:scaleX(0.8944);">Energetic</div>
<div class="t" style="left:206.24px;top:231.28px;font-size:7.2px;line-height:10.08px;font-weight:700;color:#e4e4e6;transform:scaleX(0.8911);">Relaxing</div>
<div class="t" style="left:251.31px;top:231.28px;font-size:7.2px;line-height:10.08px;font-weight:700;color:#e4e4e6;transform:scaleX(0.9662);">More</div>
<div class="t" style="left:113.28px;top:259.09px;font-size:8.4px;line-height:11.76px;font-weight:700;color:#ffffff;transform:scaleX(0.8977);">Genre</div>
<div class="t" style="left:137.16px;top:259.09px;font-size:8.4px;line-height:11.76px;font-weight:700;color:#8c8c8e;transform:scaleX(0.9288);">(optional)</div>
<div class="t" style="left:119.63px;top:279.58px;font-size:7.2px;line-height:10.08px;font-weight:700;color:#e4e4e6;transform:scaleX(0.9063);">Pop</div>
<div class="t" style="left:150.25px;top:279.58px;font-size:7.2px;line-height:10.08px;font-weight:700;color:#e4e4e6;transform:scaleX(0.8567);">Classical</div>
<div class="t" style="left:195.13px;top:279.58px;font-size:7.2px;line-height:10.08px;font-weight:700;color:#e4e4e6;transform:scaleX(0.9109);">Country</div>
<div class="t" style="left:238.60px;top:279.58px;font-size:7.2px;line-height:10.08px;font-weight:700;color:#e4e4e6;transform:scaleX(0.9836);">More</div>
<div class="t" style="left:119.18px;top:311.39px;font-size:8.4px;line-height:11.76px;font-weight:700;color:#ffffff;transform:scaleX(0.9033);">Advanced Options</div>
<div class="t" style="left:188.16px;top:311.39px;font-size:8.4px;line-height:11.76px;font-weight:700;color:#8c8c8e;transform:scaleX(0.9393);">(optional)</div>
<div class="t" style="left:119.16px;top:328.69px;font-size:8.4px;line-height:11.76px;font-weight:700;color:#ffffff;transform:scaleX(0.9297);">Song Name</div>
<div class="t" style="left:124.61px;top:349.41px;font-size:7px;line-height:9.8px;font-weight:400;color:#6c6c6e;transform:scaleX(0.9993);">Type your song name</div>
<div class="t" style="left:274.33px;top:350.70px;font-size:6.4px;line-height:8.96px;font-weight:400;color:#b0b0b2;transform:scaleX(1.0453);">0/80</div>
<div class="t" style="left:119.17px;top:370.19px;font-size:8.4px;line-height:11.76px;font-weight:700;color:#ffffff;transform:scaleX(0.9113);">Vocal Gender</div>
<div class="t" style="left:125.61px;top:391.48px;font-size:7.2px;line-height:10.08px;font-weight:700;color:#f0f0f2;transform:scaleX(0.9576);">Male</div>
<div class="t" style="left:161.24px;top:391.48px;font-size:7.2px;line-height:10.08px;font-weight:700;color:#f0f0f2;transform:scaleX(0.9042);">Female</div>
<div class="t" style="left:203.62px;top:391.48px;font-size:7.2px;line-height:10.08px;font-weight:700;color:#f0f0f2;transform:scaleX(0.9419);">Male and female</div>
<div class="t" style="left:125.22px;top:415.78px;font-size:7.2px;line-height:10.08px;font-weight:700;color:#f0f0f2;transform:scaleX(0.9436);">Choir</div>
<div class="t" style="left:142.74px;top:440.95px;font-size:8px;line-height:11.2px;font-weight:400;color:#ffffff;transform:scaleX(1.0265);">Instrumental</div>
<div class="t" style="left:190.04px;top:489.88px;font-size:10.4px;line-height:14.56px;font-weight:700;color:#17382e;transform:scaleX(0.9600);">Create</div>
<div class="t" style="left:249.67px;top:480.07px;font-size:6.3px;line-height:8.82px;font-weight:400;color:#707274;transform:scaleX(0.9457);">cost 10 credits</div>
<div class="t" style="left:528.75px;top:93.30px;font-size:18.6px;line-height:26.04px;font-weight:700;color:#ffffff;transform:scaleX(0.9132);">Discover what you can create</div>
<div class="t" style="left:472.57px;top:132.19px;font-size:8.4px;line-height:11.76px;font-weight:700;color:#ffffff;transform:scaleX(0.9157);">Tap to hear how we turn moments into music, and imagine what yours could sound like.</div>
<div class="t" style="left:455.18px;top:286.29px;font-size:8.4px;line-height:11.76px;font-weight:700;color:#ffffff;transform:scaleX(0.8943);">Eternal Birthday Joy</div>
<div class="t" style="left:600.58px;top:286.29px;font-size:8.4px;line-height:11.76px;font-weight:700;color:#ffffff;transform:scaleX(0.8986);">Cinematic Echoes</div>
<div class="t" style="left:738.58px;top:286.29px;font-size:8.4px;line-height:11.76px;font-weight:700;color:#ffffff;transform:scaleX(0.8848);">Starry Paws Lullaby</div>
<div class="t" style="left:461.06px;top:440.39px;font-size:8.4px;line-height:11.76px;font-weight:700;color:#ffffff;transform:scaleX(0.9353);">Infinite Freedom</div>
<div class="t" style="left:609.59px;top:440.39px;font-size:8.4px;line-height:11.76px;font-weight:700;color:#ffffff;transform:scaleX(0.8755);">The Last Cup</div>
<div class="t" style="left:745.57px;top:440.39px;font-size:8.4px;line-height:11.76px;font-weight:700;color:#ffffff;transform:scaleX(0.9073);">Breath of Peace</div>
<div class="t" style="left:823.62px;top:7.48px;font-size:7.2px;line-height:10.08px;font-weight:400;color:#4a2d0c;transform:scaleX(0.9539);">Upgrade</div>
</div>
</body>
</html>
